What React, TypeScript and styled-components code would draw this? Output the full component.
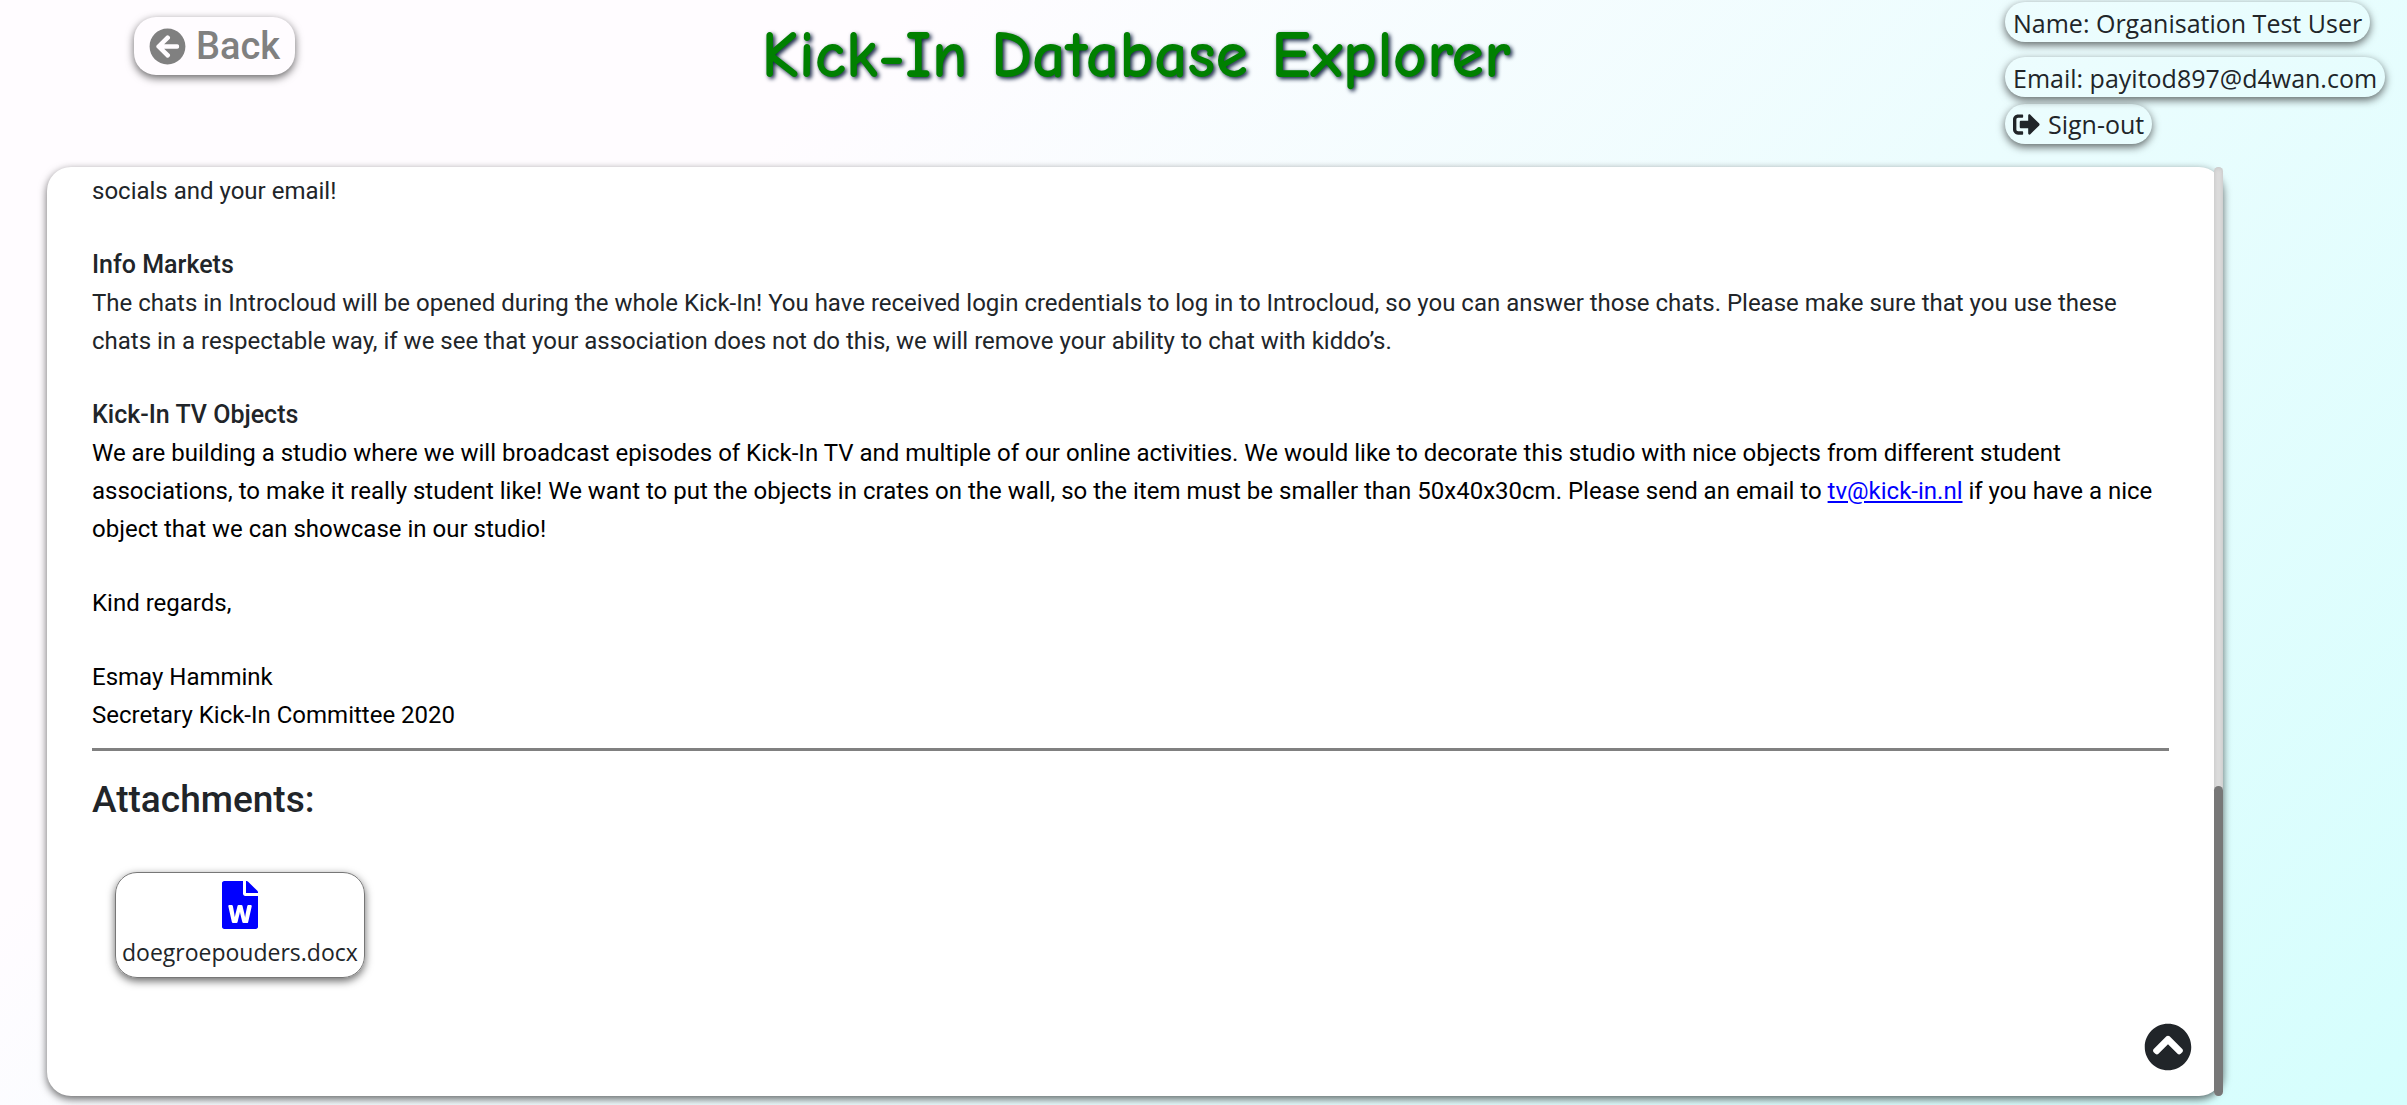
import React from "react";
import styled, { createGlobalStyle, css } from "styled-components";
import { FaArrowCircleLeft, FaSignOutAlt, FaFileWord, FaChevronCircleUp } from "react-icons/fa";

const ink = "#212529";
const uiFont = '"Segoe UI", "Open Sans", sans-serif';
const bodyFont = "Roboto, sans-serif";

const GlobalStyle = createGlobalStyle`
  * { box-sizing: border-box; }
  body { margin: 0; color: ${ink}; font-family: ${bodyFont}; }
  button { margin: 0; border: 0; background: none; color: inherit; cursor: pointer; }
`;

const raised = css`
  box-shadow: 0 3px 8px rgba(0, 0, 0, 0.6);
`;

const Page = styled.div`
  display: flex;
  flex-direction: column;
  min-height: 100vh;
  padding-bottom: 9px;
  background: linear-gradient(315deg, #d5fefd 0%, #fffcff 74%);
`;

const Header = styled.header`
  display: flex;
  align-items: flex-start;
  min-height: 167px;
  padding: 2px 14px 0 134px;
`;

const BackButton = styled.button`
  ${raised}
  display: flex;
  align-items: center;
  gap: 10px;
  height: 58px;
  margin-top: 15px;
  padding: 0 15px;
  border-radius: 22px;
  color: gray;
  font: 500 38px/60px ${bodyFont};
`;

const Title = styled.h1`
  flex: 1;
  margin: 0;
  padding: 14px 28px 0 0;
  color: green;
  font: 700 66px/80px "Comic Sans MS", "Comic Neue", Lato, sans-serif;
  text-align: center;
  text-shadow: 2px 2px 4px #102040;
`;

const Account = styled.div`
  display: flex;
  flex-direction: column;
  align-items: flex-start;
  min-width: 388px;
`;

const pill = css`
  ${raised}
  height: 40px;
  padding: 0 8px;
  border-radius: 20px;
  font: 400 25px/42px ${uiFont};
  white-space: nowrap;
`;

const AccountLine = styled.p`
  ${pill}
  margin: 0;

  & + & {
    margin-top: 15px;
  }
`;

const SignOut = styled.button`
  ${pill}
  display: flex;
  align-items: center;
  gap: 8px;
  && {
    margin-top: 7px;
  }
`;

const Panel = styled.main`
  ${raised}
  display: flex;
  flex: 1;
  margin: 0 184px 0 47px;
  border-radius: 24px;
  background: #fff;
`;

const Content = styled.div`
  display: flex;
  flex: 1;
  flex-direction: column;
  padding: 5px 45px 25px;
`;

const Message = styled.article`
  display: flex;
  flex-direction: column;
  gap: 36px;
  font-size: 24px;
  line-height: 38px;
`;

const Block = styled.section<{ $dark?: boolean }>`
  p,
  h2 {
    margin: 0;
  }
  h2 {
    font-size: 25px;
    font-weight: 500;
  }
  p {
    color: ${({ $dark }) => ($dark ? "#000" : "inherit")};
  }
  a {
    color: #00f;
  }
`;

const Rule = styled.hr`
  width: 100%;
  height: 3px;
  margin: 14px 0 0;
  border: 0;
  background: gray;
`;

const SectionTitle = styled.h2`
  margin: 26px 0 0;
  font-size: 37px;
  font-weight: 500;
  line-height: 46px;
`;

const Attachment = styled.a`
  ${raised}
  display: flex;
  flex-direction: column;
  align-items: center;
  align-self: flex-start;
  gap: 5px;
  height: 106px;
  margin: 49px 0 0 23px;
  padding: 8px 6px;
  border: 1px solid #777;
  border-radius: 22px;
  color: ${ink};
  font: 400 23px/36px ${uiFont};
  text-decoration: none;

  svg {
    flex: none;
    width: 36px;
    height: 48px;
    color: #00f;
  }
`;

const ToTop = styled.button`
  display: flex;
  align-self: flex-end;
  padding: 0;

  && {
    margin: auto -23px 0 0;
  }
`;

const ScrollTrack = styled.div`
  display: flex;
  flex-direction: column;
  justify-content: flex-end;
  width: 9px;
  border-radius: 5px;
  background: #ddd;
  box-shadow: inset 0 0 5px #c0c0c0;
`;

const ScrollThumb = styled.div`
  height: 33.4%;
  border-radius: 5px;
  background: #777;
`;

export default function App() {
  return (
    <>
      <GlobalStyle />
      <Page>
        <Header>
          <BackButton type="button">
            <FaArrowCircleLeft size={37} />
            Back
          </BackButton>
          <Title>Kick-In Database Explorer</Title>
          <Account>
            <AccountLine>Name: Organisation Test User</AccountLine>
            <AccountLine>Email: payitod897@d4wan.com</AccountLine>
            <SignOut type="button">
              <FaSignOutAlt size={27} />
              Sign-out
            </SignOut>
          </Account>
        </Header>
        <Panel>
          <Content>
            <Message>
              <Block>
                <p>socials and your email!</p>
              </Block>
              <Block>
                <h2>Info Markets</h2>
                <p>
                  The chats in Introcloud will be opened during the whole Kick-In! You have received login credentials to
                  log in to Introcloud, so you can answer those chats. Please make sure that you use these chats in a
                  respectable way, if we see that your association does not do this, we will remove your ability to chat
                  with kiddo’s.
                </p>
              </Block>
              <Block $dark>
                <h2>Kick-In TV Objects</h2>
                <p>
                  We are building a studio where we will broadcast episodes of Kick-In TV and multiple of our online
                  activities. We would like to decorate this studio with nice objects from different student
                  associations, to make it really student like! We want to put the objects in crates on the wall, so the
                  item must be smaller than 50x40x30cm. Please send an email to{" "}
                  <a href="mailto:tv@kick-in.nl">tv@kick-in.nl</a> if you have a nice object that we can showcase in our
                  studio!
                </p>
              </Block>
              <Block $dark>
                <p>Kind regards,</p>
              </Block>
              <Block $dark>
                <p>Esmay Hammink</p>
                <p>Secretary Kick-In Committee 2020</p>
              </Block>
            </Message>
            <Rule />
            <SectionTitle>Attachments:</SectionTitle>
            <Attachment href="#doegroepouders.docx">
              <FaFileWord />
              doegroepouders.docx
            </Attachment>
            <ToTop type="button" aria-label="Back to top">
              <FaChevronCircleUp size={48} />
            </ToTop>
          </Content>
          <ScrollTrack>
            <ScrollThumb />
          </ScrollTrack>
        </Panel>
      </Page>
    </>
  );
}
